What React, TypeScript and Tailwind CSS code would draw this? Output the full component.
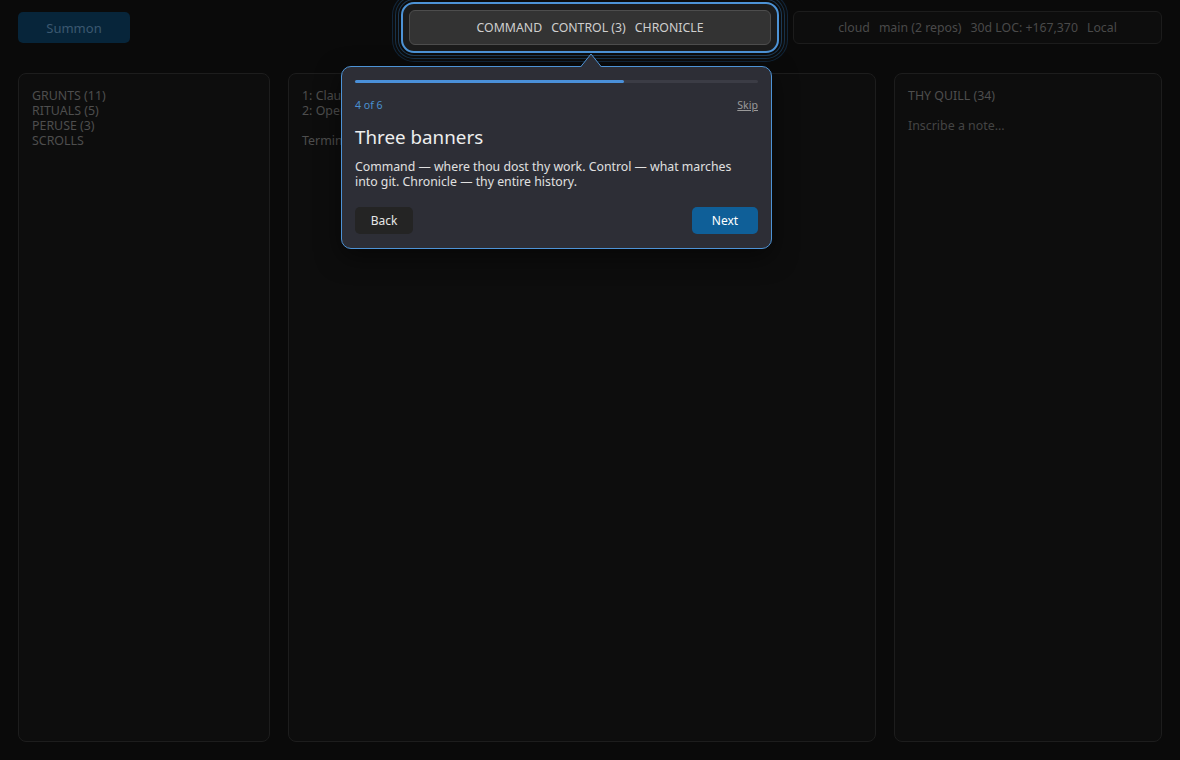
import React from "react";

const font = { fontFamily: '"Noto Sans", "Open Sans", sans-serif' };

function Header() {
  return (
    <div className="flex h-[55px] items-center px-[18px]">
      <button className="h-[31px] w-[112px] rounded-[5px] bg-[#07253a] text-[13px] leading-[16px] text-[#3b5870]">
        Summon
      </button>
      <div className="relative ml-[279px] w-[362px]">
        {/* spotlight rings around the banner switcher */}
        <div className="absolute -inset-[8px] rounded-[13px] border-2 border-[#4d93d6] bg-[#1c1c1c] shadow-[0_0_0_2px_#0c0c0c,0_0_0_3px_#1d3a55,0_0_0_5px_#0c0c0c,0_0_0_6px_#17324a,0_0_0_8px_#0c0c0c,0_0_0_9px_#12263a]" />
        <div className="relative flex h-[35px] items-center justify-center gap-[9px] rounded-[6px] border border-[#4d4d4d] bg-[#333333] text-[12.3px] leading-[15px] text-[#cfcfcf]">
          <span>COMMAND</span>
          <span>CONTROL (3)</span>
          <span>CHRONICLE</span>
        </div>
      </div>
      <div className="ml-[22px] flex h-[33px] w-[369px] items-center justify-center gap-[9px] rounded-[6px] border border-[#1c1c1c] bg-[#0d0d0d] text-[12.3px] leading-[15px] text-[#4a4a4a]">
        <span>cloud</span>
        <span>main (2 repos)</span>
        <span>30d LOC: +167,370</span>
        <span>Local</span>
      </div>
    </div>
  );
}

function Panels() {
  return (
    <div className="mt-[18px] flex h-[669px] gap-[18px] px-[18px]">
      <div className="w-[252px] rounded-[8px] border border-[#1d1d1d] bg-[#0d0d0d] px-[13px] py-[14px] text-[12.4px] leading-[15px] text-[#4e4e4e]">
        <div>GRUNTS (11)</div>
        <div>RITUALS (5)</div>
        <div>PERUSE (3)</div>
        <div>SCROLLS</div>
      </div>
      <div className="w-[588px] rounded-[8px] border border-[#1d1d1d] bg-[#0d0d0d] px-[13px] py-[14px] text-[12.4px] leading-[15px] text-[#4e4e4e]">
        <div>1: Claude</div>
        <div>2: OpenCode</div>
        <div className="mt-[15px]">Terminal</div>
      </div>
      <div className="flex-1 rounded-[8px] border border-[#1d1d1d] bg-[#0d0d0d] px-[13px] py-[14px] text-[12.4px] leading-[15px] text-[#4e4e4e]">
        <div>THY QUILL (34)</div>
        <div className="mt-[15px] text-[#444444]">Inscribe a note...</div>
      </div>
    </div>
  );
}

function Tour() {
  return (
    <div className="absolute left-[341px] top-[66px] w-[431px] rounded-[10px] border border-[#4d93d6] bg-[#2d2e36] px-[13px] pb-[14px] pt-[13px] shadow-[0_8px_24px_rgba(0,0,0,0.5)]">
      <svg
        className="absolute left-[238px] top-[-14px]"
        width="22"
        height="15"
        viewBox="0 0 22 15"
      >
        <path d="M0 14.5 L11 1 L22 14.5 Z" fill="#2d2e36" />
        <path d="M0.5 14 L11 1 L21.5 14" fill="none" stroke="#4d93d6" strokeWidth="1" />
      </svg>
      <div className="h-[3px] w-full rounded-full bg-[#3b3c45]">
        <div className="h-full rounded-full bg-[#4a90d9]" style={{ width: `${(4 / 6) * 100}%` }} />
      </div>
      <div className="mt-[16px] flex items-center justify-between text-[10.6px] leading-[13px]">
        <span className="text-[#4a90d0]">4 of 6</span>
        <span className="text-[#9a9a9a] underline">Skip</span>
      </div>
      <div className="mt-[13px] text-[18.8px] leading-[24px] text-[#eeeeee]">Three banners</div>
      <div className="mt-[10px] max-w-[390px] text-[12.3px] leading-[15px] text-[#e0e0e0]">
        Command — where thou dost thy work. Control — what marches into git. Chronicle — thy entire
        history.
      </div>
      <div className="mt-[18px] flex items-center justify-between">
        <button className="h-[27px] w-[58px] rounded-[5px] bg-[#242424] text-[12px] leading-[15px] text-[#e6e6e6]">
          Back
        </button>
        <button className="h-[27px] w-[66px] rounded-[5px] bg-[#0f5f98] text-[12px] leading-[15px] text-white">
          Next
        </button>
      </div>
    </div>
  );
}

export default function App() {
  return (
    <div className="relative h-[760px] w-[1180px] overflow-hidden bg-[#0a0a0a]" style={font}>
      <Header />
      <Panels />
      <Tour />
    </div>
  );
}
